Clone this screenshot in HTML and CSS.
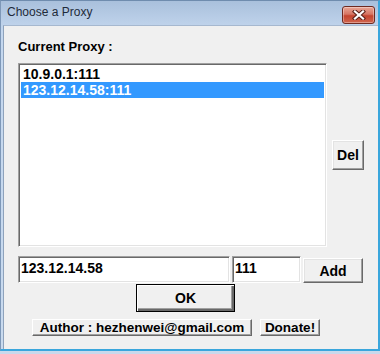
FILE: index.html
```html
<!DOCTYPE html>
<html lang="en">
<head>
    <meta charset="UTF-8">
    <title>Choose a Proxy</title>
    <link rel="stylesheet" href="styles.css">
</head>
<body>

    <div class="window">
        <div class="titlebar">
            <span class="title">Choose a Proxy</span>
            <button class="close-btn" title="Close">
                <svg width="14" height="10" viewBox="0 0 14 10">
                    <path d="M3 1.5 L11 8.5 M11 1.5 L3 8.5" stroke="#5a2219" stroke-width="4.2" stroke-linecap="square"/>
                    <path d="M3 1.5 L11 8.5 M11 1.5 L3 8.5" stroke="#fff" stroke-width="2.2" stroke-linecap="square"/>
                </svg>
            </button>
        </div>

        <div class="client">
            <div class="label">Current Proxy :</div>

            <div class="list-row">
                <ul class="proxy-list">
                    <li>10.9.0.1:111</li>
                    <li class="selected">123.12.14.58:111</li>
                </ul>
                <button class="btn btn-del">Del</button>
            </div>

            <div class="input-row">
                <input class="field field-ip" type="text" value="123.12.14.58">
                <input class="field field-port" type="text" value="111">
                <button class="btn btn-add">Add</button>
            </div>

            <div class="ok-row">
                <button class="btn btn-ok">OK</button>
            </div>

            <div class="footer-row">
                <button class="btn-flat btn-author">Author : hezhenwei@gmail.com</button>
                <button class="btn-flat btn-donate">Donate!</button>
            </div>
        </div>
    </div>

</body>
</html>
```

FILE: styles.css
```css
* {
    margin: 0;
    padding: 0;
    box-sizing: border-box;
}

body {
    font-family: "Liberation Sans", Arial, sans-serif;
    background-color: #c9d9ec;
    width: 380px;
    height: 354px;
    overflow: hidden;
}

/* Marco de la ventana */
.window {
    width: 380px;
    height: 351px;
    background: linear-gradient(#a9c0dc, #c4d7ee 30px, #c9daee);
    border-right: 2px solid #3aa6dc;
    border-bottom: 2px solid #3aa6dc;
    border-top: 1px solid #6f8cae;
    border-left: 1px solid #7e98b8;
    display: flex;
    flex-direction: column;
}

.titlebar {
    height: 24px;
    display: flex;
    align-items: center;
    justify-content: space-between;
    padding: 0 3px 0 6px;
}

.title {
    font-size: 12px;
    color: #1e2a3a;
    margin-top: -3px;
}

.close-btn {
    width: 33px;
    height: 18px;
    margin-top: 3px;
    border: 1px solid #6e2a21;
    border-radius: 3px;
    background: linear-gradient(#e9a696, #d67563 45%, #c4442f 55%, #d0654d);
    box-shadow: inset 0 0 0 1px rgba(255, 255, 255, 0.35);
    display: flex;
    align-items: center;
    justify-content: center;
}

/* Zona cliente */
.client {
    flex: 1;
    margin: 0 0 0 2px;
    background-color: #f0f0f0;
    border-top: 1px solid #a6b8cf;
    border-left: 1px solid #8ea2bb;
    padding: 13px 0 0 14px;
}

.label {
    font-size: 13px;
    font-weight: bold;
    line-height: 15px;
    color: #000;
    margin-bottom: 9px;
}

.list-row {
    display: flex;
    align-items: center;
    gap: 5px;
}

.proxy-list {
    list-style-type: none;
    width: 309px;
    height: 184px;
    background-color: #fff;
    border: 1px solid;
    border-color: #a0a0a0 #fff #fff #a0a0a0;
    box-shadow: inset 1px 1px 0 #696969, inset -1px -1px 0 #e3e3e3;
    padding: 2px 2px;
}

.proxy-list li {
    font-size: 14px;
    font-weight: bold;
    line-height: 16px;
    height: 16px;
    padding-left: 2px;
    color: #000;
}

.proxy-list li.selected {
    background-color: #3399ff;
    color: #fff;
}

/* Botones clásicos */
.btn {
    font-family: "Liberation Sans", Arial, sans-serif;
    font-size: 14px;
    font-weight: bold;
    color: #000;
    background-color: #f0f0f0;
    border: 1px solid;
    border-color: #fff #696969 #696969 #fff;
    box-shadow: inset -1px -1px 0 #a0a0a0, inset 1px 1px 0 #e3e3e3;
}

.btn-del {
    width: 32px;
    height: 30px;
}

.input-row {
    display: flex;
    align-items: flex-start;
    gap: 2px;
    margin-top: 9px;
}

.field {
    height: 27px;
    font-family: "Liberation Sans", Arial, sans-serif;
    font-size: 14px;
    font-weight: bold;
    color: #000;
    background-color: #fff;
    border: 1px solid;
    border-color: #a0a0a0 #fff #fff #a0a0a0;
    box-shadow: inset 1px 1px 0 #696969, inset -1px -1px 0 #e3e3e3;
    padding: 0 2px 3px;
    outline: none;
}

.field-ip {
    width: 212px;
}

.field-port {
    width: 69px;
}

.btn-add {
    width: 60px;
    height: 25px;
    margin-top: 2px;
}

.ok-row {
    margin-top: 1px;
    padding-left: 118px;
}

.btn-ok {
    width: 99px;
    height: 28px;
    border: 1px solid #000;
    box-shadow: inset 1px 1px 0 #fff, inset -2px -2px 0 #696969, inset -3px -3px 0 #a0a0a0;
}

.footer-row {
    display: flex;
    gap: 8px;
    margin-top: 7px;
    padding-left: 14px;
}

.btn-flat {
    height: 17px;
    font-family: "Liberation Sans", Arial, sans-serif;
    font-size: 13.5px;
    font-weight: bold;
    line-height: 13px;
    color: #000;
    background-color: #f0f0f0;
    border: 1px solid;
    border-color: #fff #696969 #696969 #fff;
    box-shadow: inset -1px -1px 0 #a0a0a0;
}

.btn-author {
    width: 220px;
}

.btn-donate {
    width: 60px;
}
```
